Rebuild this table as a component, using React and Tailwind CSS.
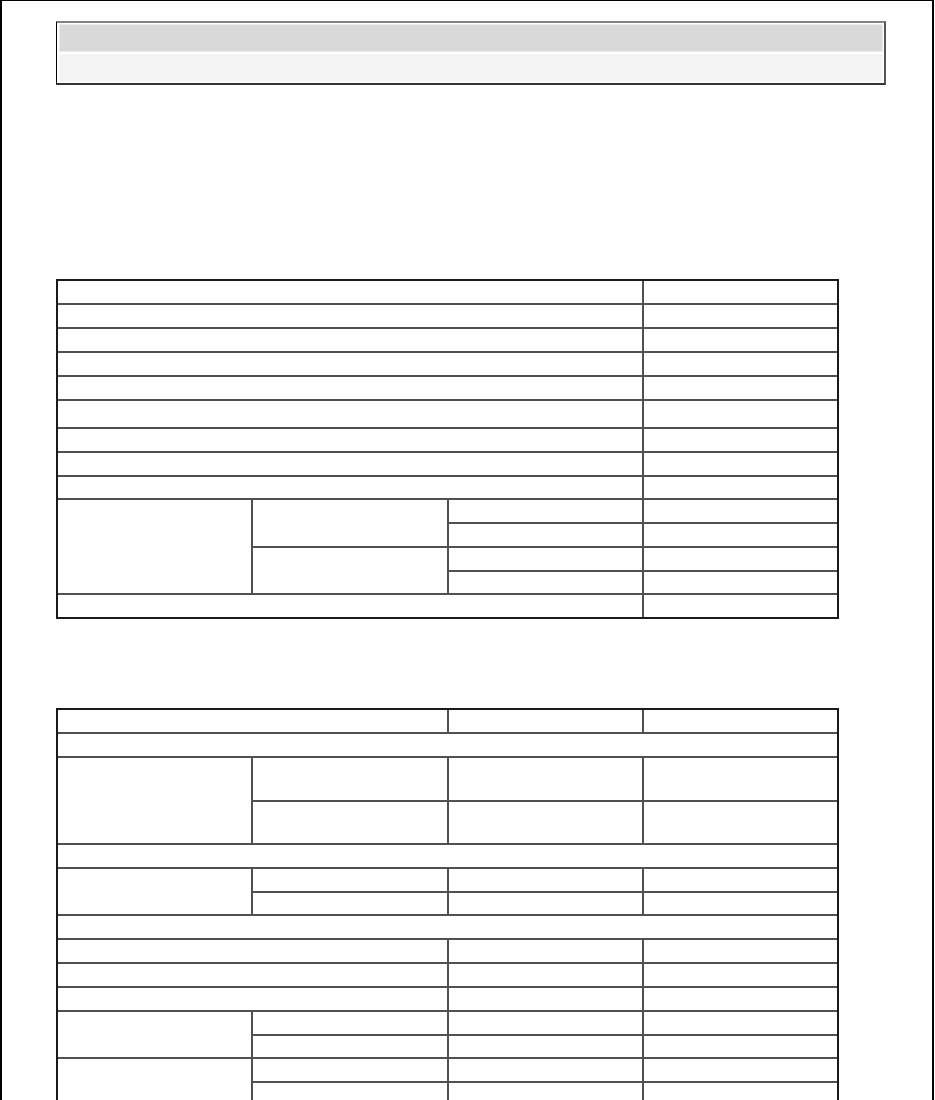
import React from 'react';

const Cell = ({ span = '' }) => <div className={`bg-white ${span}`} />;

const SpecTableOne = () => (
  <div className="grid w-[783px] grid-cols-4 grid-rows-[22px_22px_22px_22px_22px_26px_22px_22px_21px_22px_22px_22px_21px_22px] gap-[2px] border-2 border-[#1a1a1a] bg-[#505050]">
    {Array.from({ length: 9 }).map((_, i) => (
      <React.Fragment key={i}>
        <Cell span="col-span-3" />
        <Cell />
      </React.Fragment>
    ))}
    <Cell span="row-span-4" />
    <Cell span="row-span-2" />
    <Cell />
    <Cell />
    <Cell />
    <Cell />
    <Cell span="row-span-2" />
    <Cell />
    <Cell />
    <Cell />
    <Cell />
    <Cell span="col-span-3" />
    <Cell />
  </div>
);

const SplitPair = () => (
  <>
    <Cell span="row-span-2" />
    <Cell />
    <Cell />
    <Cell />
    <Cell />
    <Cell />
    <Cell />
  </>
);

const SpecTableTwo = () => (
  <div className="grid w-[783px] grid-cols-4 grid-rows-[22px_22px_42px_41px_22px_22px_21px_22px_22px_22px_22px_22px_21px_22px_22px_22px_22px] gap-[2px] border-2 border-[#1a1a1a] bg-[#505050]">
    <Cell span="col-span-2" />
    <Cell />
    <Cell />
    <Cell span="col-span-4" />
    <SplitPair />
    <Cell span="col-span-4" />
    <SplitPair />
    <Cell span="col-span-4" />
    {Array.from({ length: 3 }).map((_, i) => (
      <React.Fragment key={i}>
        <Cell span="col-span-2" />
        <Cell />
        <Cell />
      </React.Fragment>
    ))}
    <SplitPair />
    <SplitPair />
    <SplitPair />
  </div>
);

export default function App() {
  return (
    <div className="h-[1100px] w-[934px] overflow-hidden border-l-2 border-r-2 border-t border-black bg-white">
      <div className="ml-[54px] mt-[20px] flex w-[830px] flex-col gap-[2px] border-b-2 border-l border-r-2 border-t-2 border-b-[#333333] border-l-black border-r-[#555555] border-t-[#808080] pb-[1px] pl-[2px] pr-[1px] pt-[1px]">
        <div className="h-[28px] border border-[#ececec] bg-[#d9d9d9]" />
        <div className="h-[28px] border border-[#f8f8f8] bg-[#f3f3f3]" />
      </div>

      <div className="ml-[54px] mt-[194px]">
        <SpecTableOne />
      </div>

      <div className="ml-[54px] mt-[89px]">
        <SpecTableTwo />
      </div>
    </div>
  );
}
